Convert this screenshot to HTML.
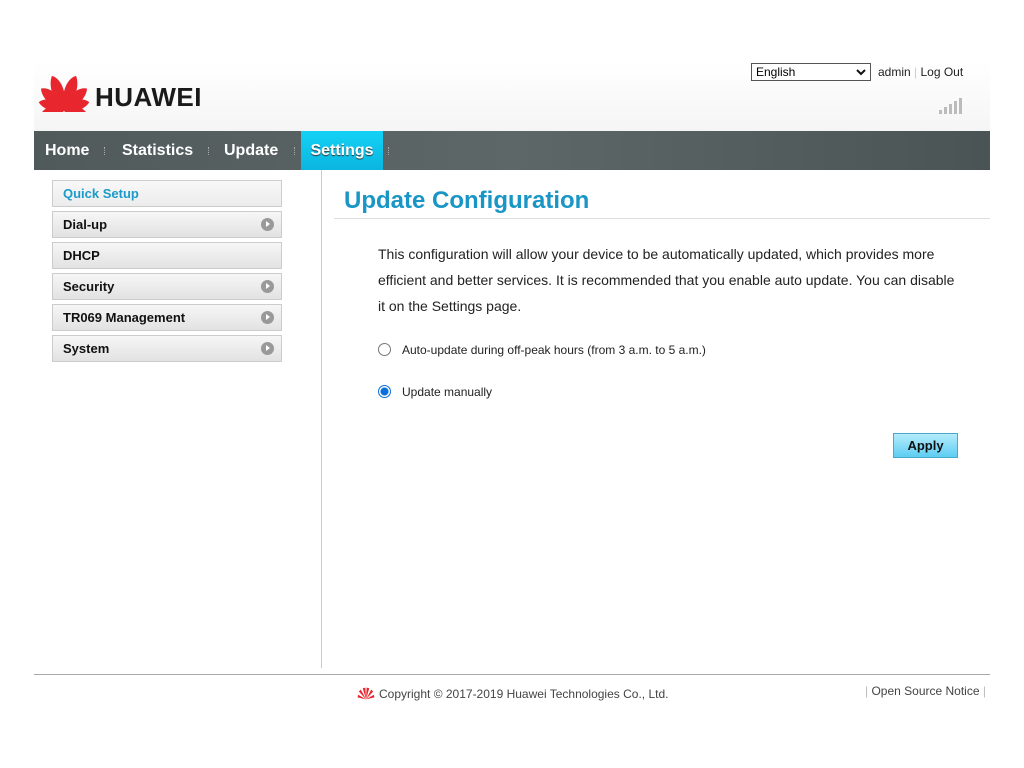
<!DOCTYPE html>
<html><head><meta charset="utf-8"><style>
*{margin:0;padding:0;box-sizing:border-box}
body{width:1024px;height:768px;background:#fff;font-family:"Liberation Sans",Arial,sans-serif;position:relative;overflow:hidden}
.hdr{position:absolute;left:34px;top:62px;width:956px;height:69px;background:linear-gradient(#fff,#f5f5f5)}
.nav{position:absolute;left:34px;top:131px;width:956px;height:39px;background:linear-gradient(90deg,#505a5b,#5d6767 50%,#4a5455)}
.nav span{position:absolute;top:0;height:39px;line-height:39px;color:#fff;font-weight:bold;font-size:16px}
.nav i{position:absolute;top:16px;width:1px;height:8px;border-left:1px dotted #aaa}
.sel{background:linear-gradient(#13d2f5,#0bb5e0);text-shadow:0 1px 1px #333}
.side div{position:absolute;left:52px;width:230px;height:27px;border:1px solid #ccc;background:linear-gradient(#f6f6f6,#e2e2e2);font-weight:bold;font-size:13px;line-height:25px;padding-left:10px;color:#111}
.side b{position:absolute;right:7px;top:6px;width:13px;height:13px;border-radius:50%;background:#999}
.side b:after{content:"";position:absolute;left:5px;top:3px;border-left:4px solid #fff;border-top:3.5px solid transparent;border-bottom:3.5px solid transparent}
.vl{position:absolute;left:321px;top:170px;width:1px;height:498px;background:#ccc}
h1{position:absolute;left:344px;top:187px;font-size:24px;color:#1996c6;font-weight:bold}
.hl{position:absolute;left:334px;top:218px;width:656px;height:1px;background:#ddd}
p{position:absolute;left:378px;top:241px;width:580px;font-size:14px;line-height:26px;color:#222}
.r{position:absolute;left:378px;font-size:12px;color:#222}
.r em{position:absolute;left:0;top:0;width:13px;height:13px;border-radius:50%;border:1px solid #777}
.r span{position:absolute;left:24px;top:0;white-space:nowrap}
.btn{position:absolute;left:893px;top:433px;width:65px;height:25px;border:1px solid #4aa9c9;background:linear-gradient(#b6ecfb,#5ccdf2);font-weight:bold;font-size:13px;text-align:center;line-height:23px;color:#111}
.fl{position:absolute;left:34px;top:674px;width:956px;height:1px;background:#aaa}
</style></head><body>
<div class="hdr"></div>
<svg style="position:absolute;left:38px;top:72px" width="52" height="40" viewBox="-26 -38 52 40">
<g fill="#e8262d">
<path d="M0,0 C-9,-10 -10,-28 -4,-36 C5,-31 7,-14 0,0Z" transform="rotate(-13)"/>
<path d="M0,0 C-9,-10 -10,-28 -4,-36 C5,-31 7,-14 0,0Z" transform="scale(-1,1) rotate(-13)"/>
<path d="M0,0 C-9,-9 -10,-24 -5,-31 C4,-27 6,-12 0,0Z" transform="rotate(-38)"/>
<path d="M0,0 C-9,-9 -10,-24 -5,-31 C4,-27 6,-12 0,0Z" transform="scale(-1,1) rotate(-38)"/>
<path d="M0,0 C-8,-7 -9,-19 -5,-26 C4,-22 5,-10 0,0Z" transform="rotate(-62)"/>
<path d="M0,0 C-8,-7 -9,-19 -5,-26 C4,-22 5,-10 0,0Z" transform="scale(-1,1) rotate(-62)"/>
<path d="M0,1 C-6,-4 -7,-15 -4,-22 C3,-18 4,-8 0,1Z" transform="rotate(-86)"/>
<path d="M0,1 C-6,-4 -7,-15 -4,-22 C3,-18 4,-8 0,1Z" transform="scale(-1,1) rotate(-86)"/>
</g></svg>
<div style="position:absolute;left:95px;top:82px;font-size:26px;font-weight:bold;color:#1a1a1a;letter-spacing:0.5px">HUAWEI</div>
<div style="position:absolute;left:751px;top:63px;width:120px;height:18px;border:1px solid #555;background:#fff;font-size:12px;line-height:16px;padding-left:4px">English<svg style="position:absolute;right:4px;top:5px" width="10" height="7"><path d="M1,1 L5,5 L9,1" stroke="#111" stroke-width="2" fill="none"/></svg></div>
<div style="position:absolute;left:878px;top:65px;font-size:12px;color:#222">admin <span style="color:#ccc">|</span> Log Out</div>
<svg style="position:absolute;left:938px;top:96px" width="28" height="20"><g fill="#bbb"><rect x="1" y="14" width="3" height="4"/><rect x="6" y="11" width="3" height="7"/><rect x="11" y="8" width="3" height="10"/><rect x="16" y="5" width="3" height="13"/><rect x="21" y="2" width="3" height="16"/></g></svg>
<div class="nav">
<span style="left:11px">Home</span><i style="left:70px"></i>
<span style="left:88px">Statistics</span><i style="left:174px"></i>
<span style="left:190px">Update</span><i style="left:260px"></i>
<span class="sel" style="left:267px;width:82px;text-align:center">Settings</span><i style="left:354px"></i>
</div>
<div class="side">
<div style="top:180px;color:#1a9bc9;background:linear-gradient(#f8f8f8,#ececec)">Quick Setup</div>
<div style="top:211px">Dial-up<b></b></div>
<div style="top:242px">DHCP</div>
<div style="top:273px">Security<b></b></div>
<div style="top:304px">TR069 Management<b></b></div>
<div style="top:335px">System<b></b></div>
</div>
<div class="vl"></div>
<h1>Update Configuration</h1>
<div class="hl"></div>
<p>This configuration will allow your device to be automatically updated, which provides more efficient and better services. It is recommended that you enable auto update. You can disable it on the Settings page.</p>
<div class="r" style="top:343px"><em></em><span>Auto-update during off-peak hours (from 3 a.m. to 5 a.m.)</span></div>
<div class="r" style="top:385px"><em style="border:1px solid #0a6fd8;background:radial-gradient(#0a6fd8 3.5px,#fff 4.5px)"></em><span>Update manually</span></div>
<div class="btn">Apply</div>
<div class="fl"></div>
<svg style="position:absolute;left:357px;top:687px" width="18" height="13" viewBox="-26 -38 52 40"><g fill="#e8262d"><path d="M0,0 L-10,-34 L-2,-36Z"/><path d="M0,0 L10,-34 L2,-36Z"/><path d="M0,0 L-22,-24 L-16,-30Z"/><path d="M0,0 L22,-24 L16,-30Z"/><path d="M0,0 L-26,-6 L-24,-14Z"/><path d="M0,0 L26,-6 L24,-14Z"/></g></svg>
<div style="position:absolute;left:379px;top:687px;font-size:12px;color:#444">Copyright © 2017-2019 Huawei Technologies Co., Ltd.</div>
<div style="position:absolute;left:865px;top:684px;font-size:12px;color:#444"><span style="color:#bbb">|</span> Open Source Notice <span style="color:#bbb">|</span></div>
</body></html>
